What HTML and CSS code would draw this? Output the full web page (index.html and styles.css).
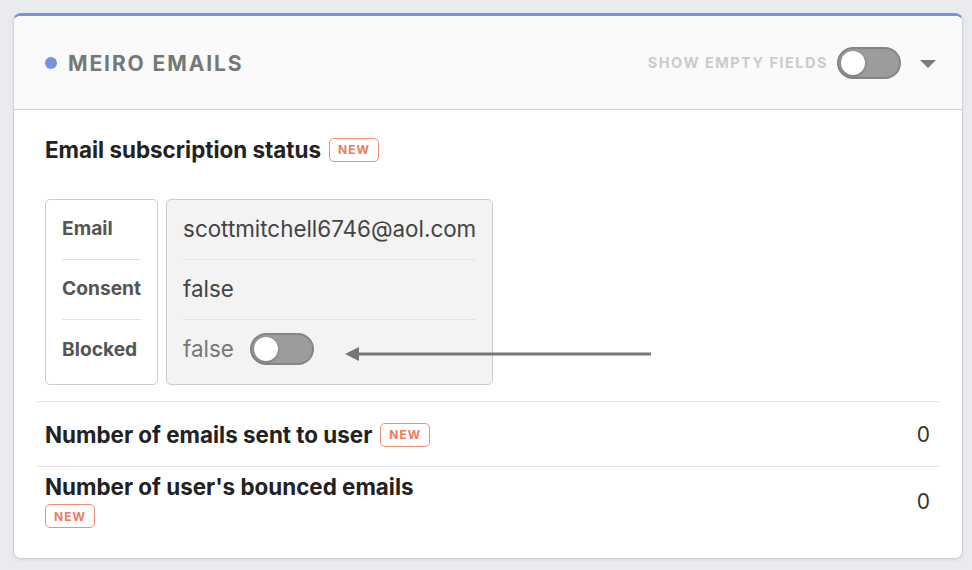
FILE: index.html
```html
<!DOCTYPE html>
<html>
<head>
<meta charset="utf-8">
<link rel="stylesheet" href="styles.css">
</head>
<body>
<div class="card">
  <div class="card-header">
    <div class="title"><span class="dot"></span>MEIRO EMAILS</div>
    <div class="header-right">
      <span class="show-empty">SHOW EMPTY FIELDS</span>
      <span class="toggle"><span class="knob"></span></span>
      <svg class="caret" width="16" height="9" viewBox="0 0 16 9"><path d="M0 0 H16 L8 8 Z" fill="#7a7a7a"/></svg>
    </div>
  </div>
  <div class="card-body">
    <div class="section">
      <h2 class="heading">Email subscription status <span class="badge">NEW</span></h2>
      <div class="compound">
        <div class="labels">
          <div class="cell">Email</div>
          <div class="cell">Consent</div>
          <div class="cell last">Blocked</div>
        </div>
        <div class="values">
          <div class="cell">scottmitchell6746@aol.com</div>
          <div class="cell">false</div>
          <div class="cell last muted">false <span class="toggle small"><span class="knob"></span></span></div>
        </div>
        <svg class="arrow" width="306" height="16" viewBox="0 0 306 16"><path d="M0 8 L14 1 L14 15 Z" fill="#777"/><rect x="12" y="6.5" width="294" height="3" fill="#777"/></svg>
      </div>
    </div>
    <div class="rows">
      <div class="row">
        <div class="row-label"><span class="name">Number of emails sent to user</span> <span class="badge">NEW</span></div>
        <div class="row-value">0</div>
      </div>
      <div class="row second">
        <div class="row-label stacked"><span class="name">Number of user's bounced emails</span><span class="badge">NEW</span></div>
        <div class="row-value">0</div>
      </div>
    </div>
  </div>
</div>
</body>
</html>
```

FILE: styles.css
```css
html, body {
  margin: 0;
  padding: 0;
  background: #e9ebee;
  font-family: Inter, "Noto Sans", sans-serif;
}
body {
  padding: 13px 9px 12px 13px;
}
.card {
  width: 948px;
  background: #fff;
  border: 1px solid #d2d2d2;
  border-top: 3px solid #7693dd;
  border-radius: 8px;
  box-shadow: 0 1px 3px rgba(0,0,0,0.08);
  overflow: hidden;
}
.card-header {
  height: 93px;
  background: #fafafa;
  border-bottom: 1px solid #cfcfcf;
  display: flex;
  align-items: center;
  justify-content: space-between;
  padding: 0 26px 0 31px;
}
.title {
  display: flex;
  align-items: center;
  font-size: 21px;
  font-weight: 700;
  letter-spacing: 1.9px;
  color: #777;
  margin-top: 2px;
}
.dot {
  width: 12px;
  height: 12px;
  border-radius: 50%;
  background: #7693dd;
  margin-right: 11px;
  margin-top: -2px;
}
.header-right {
  display: flex;
  align-items: center;
}
.show-empty {
  font-size: 14.5px;
  font-weight: 700;
  letter-spacing: 1.5px;
  color: #cbcbcb;
  margin-right: 9px;
}
.toggle {
  display: inline-flex;
  align-items: center;
  box-sizing: border-box;
  width: 64px;
  height: 32px;
  border-radius: 16px;
  background: #9c9c9c;
  border: 2px solid #858585;
  padding: 0 2px;
}
.knob {
  width: 24px;
  height: 24px;
  border-radius: 50%;
  background: #fff;
  box-shadow: 0 1px 3px rgba(0,0,0,0.3);
}
.caret {
  margin-left: 19px;
  margin-top: 4px;
}
.card-body {
  padding: 0 23px 0 23px;
}
.section {
  padding: 28px 8px 16px 8px;
}
.heading {
  margin: 0;
  font-size: 22.4px;
  line-height: 24px;
  font-weight: 700;
  color: #222;
  display: flex;
  align-items: center;
}
.badge {
  display: inline-flex;
  align-items: center;
  box-sizing: border-box;
  height: 24px;
  padding: 0 8px;
  border: 1px solid #ef8f74;
  border-radius: 5px;
  color: #ee7b5c;
  font-size: 12px;
  font-weight: 700;
  letter-spacing: 1px;
  margin-left: 8px;
}
.compound {
  position: relative;
  display: flex;
  gap: 8px;
  margin-top: 37px;
}
.labels, .values {
  border: 1px solid #cdcdcd;
  border-radius: 5px;
  padding: 0 16px 4px 16px;
}
.labels {
  background: #fff;
}
.values {
  background: #f3f3f3;
}
.cell {
  box-sizing: border-box;
  height: 60px;
  padding-bottom: 3px;
  border-bottom: 1px solid #e3e3e3;
  display: flex;
  align-items: center;
}
.cell.last {
  border-bottom: none;
  height: 60px;
}
.labels .cell {
  font-size: 19.2px;
  font-weight: 700;
  color: #555;
}
.values .cell {
  font-size: 22.4px;
  color: #444;
}
.values .cell.muted {
  color: #777;
}
.toggle.small {
  margin-left: 16px;
}
.arrow {
  position: absolute;
  left: 300px;
  top: 147px;
}
.rows {
  display: flex;
  flex-direction: column;
}
.row {
  display: flex;
  align-items: center;
  justify-content: space-between;
  border-top: 1px solid #e3e3e3;
  padding: 20px 9px 19px 8px;
}
.row.second {
  padding: 8px 9px 30px 8px;
}
.row-label {
  display: flex;
  align-items: center;
}
.row-label.stacked {
  flex-direction: column;
  align-items: flex-start;
}
.row-label.stacked .badge {
  margin-left: 0;
  margin-top: 5px;
}
.name {
  font-size: 22.4px;
  line-height: 24px;
  font-weight: 700;
  color: #222;
}
.row-value {
  font-size: 21px;
  color: #333;
}
```
